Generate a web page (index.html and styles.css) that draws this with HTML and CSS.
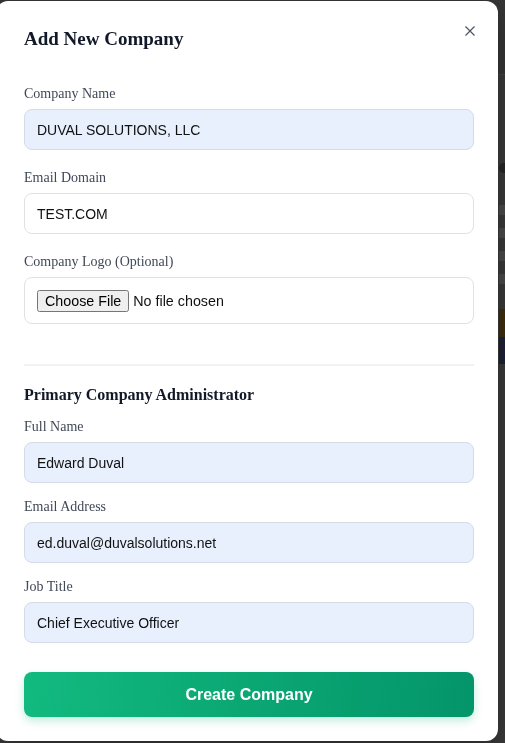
FILE: index.html
```html
<!DOCTYPE html>
<html lang="en">
<head>
<meta charset="utf-8">
<title>Add New Company</title>
<link rel="stylesheet" href="styles.css">
</head>
<body>
<div class="page">
  <div class="page-top"></div>
  <div class="page-body">
    <div class="page-icon"></div>
    <div class="page-mark"></div>
    <div class="page-mark"></div>
    <div class="page-mark"></div>
    <div class="page-mark"></div>
    <div class="page-amber"></div>
    <div class="page-navy"></div>
  </div>
</div>

<div class="modal">
  <div class="modal-header">
    <h2 class="modal-title">Add New Company</h2>
    <button class="close-btn" aria-label="Close">
      <svg width="10" height="10" viewBox="0 0 10 10"><path d="M0.5 0.5 L9.5 9.5 M9.5 0.5 L0.5 9.5" stroke="#4b5563" stroke-width="1.2" fill="none"/></svg>
    </button>
  </div>

  <form class="form">
    <div class="group">
      <label class="label">Company Name</label>
      <input class="input filled" type="text" value="DUVAL SOLUTIONS, LLC">
    </div>
    <div class="group">
      <label class="label">Email Domain</label>
      <input class="input plain" type="text" value="TEST.COM">
    </div>
    <div class="group">
      <label class="label">Company Logo (Optional)</label>
      <div class="file-box"><input class="file" type="file"></div>
    </div>

    <hr class="divider">

    <h3 class="section-title">Primary Company Administrator</h3>
    <div class="group tight">
      <label class="label">Full Name</label>
      <input class="input filled" type="text" value="Edward Duval">
    </div>
    <div class="group tight">
      <label class="label">Email Address</label>
      <input class="input filled" type="text" value="ed.duval@duvalsolutions.net">
    </div>
    <div class="group tight">
      <label class="label">Job Title</label>
      <input class="input filled" type="text" value="Chief Executive Officer">
    </div>

    <button type="button" class="submit">Create Company</button>
  </form>
</div>
</body>
</html>
```

FILE: styles.css
```css
html, body {
  margin: 0;
  padding: 0;
  height: 100%;
}
body {
  background: #3a3a3a;
  font-family: "Liberation Serif", serif;
  overflow: hidden;
}
.page {
  display: flex;
  flex-direction: column;
  height: 100%;
}
.page-top {
  height: 74px;
  background: #363636;
  border-bottom: 1px solid #444;
}
.page-body {
  padding: 88px 0 0 499px;
  display: flex;
  flex-direction: column;
}
.page-icon {
  width: 10px;
  height: 10px;
  border-radius: 50%;
  background: #262626;
  margin-bottom: 32px;
}
.page-mark {
  width: 6px;
  height: 10px;
  background: #4a4a4a;
  margin-bottom: 13px;
}
.page-amber {
  margin-top: 12px;
  height: 28px;
  background: #3d2e0e;
}
.page-navy {
  height: 27px;
  background: #1f2236;
}

.modal {
  position: fixed;
  left: -4px;
  top: 1px;
  width: 502px;
  height: 740px;
  box-sizing: border-box;
  background: #ffffff;
  border-radius: 12px;
  padding: 24px 24px 24px 28px;
  box-shadow: 0 10px 30px rgba(0,0,0,0.3);
}
.modal-header {
  display: flex;
  justify-content: space-between;
  align-items: flex-start;
  margin-bottom: 31px;
}
.modal-title {
  margin: 0;
  font-family: "Liberation Serif", serif;
  font-size: 19px;
  line-height: 28px;
  font-weight: 700;
  color: #111827;
}
.close-btn {
  border: 0;
  background: none;
  padding: 0;
  margin: 1px -1px 0 0;
  width: 10px;
  height: 10px;
  display: flex;
  cursor: pointer;
}
.form {
  display: flex;
  flex-direction: column;
}
.group {
  display: flex;
  flex-direction: column;
  margin-bottom: 18px;
}
.group.tight {
  margin-bottom: 14px;
}
.label {
  font-family: "Liberation Serif", serif;
  font-size: 14px;
  line-height: 20px;
  color: #404856;
  margin-bottom: 5px;
}
.input {
  box-sizing: border-box;
  height: 41px;
  width: 100%;
  border-radius: 8px;
  padding: 0 12px;
  font-family: "Liberation Sans", Arial, sans-serif;
  font-size: 14px;
  color: #111;
  outline: none;
}
.input.filled {
  background: #e8f0fe;
  border: 1px solid #d5dbe5;
}
.input.plain {
  background: #fff;
  border: 1px solid #dfe1e5;
}
.file-box {
  box-sizing: border-box;
  height: 47px;
  border: 1px solid #dfe1e5;
  border-radius: 8px;
  padding: 0 12px;
  display: flex;
  align-items: center;
}
.file {
  font-family: "Liberation Sans", Arial, sans-serif;
  font-size: 14.3px;
  color: #111;
}
.divider {
  border: 0;
  border-top: 2px solid #f1f2f4;
  margin: 22px 0 17px;
}
.section-title {
  margin: 0 0 10px;
  font-family: "Liberation Serif", serif;
  font-size: 16px;
  line-height: 24px;
  font-weight: 700;
  color: #111827;
}
.submit {
  margin-top: 15px;
  height: 45px;
  border: 0;
  border-radius: 8px;
  background: linear-gradient(100deg, #12ba80 0%, #0aa572 55%, #04956a 100%);
  color: #fff;
  font-family: "Liberation Sans", Arial, sans-serif;
  font-size: 16px;
  font-weight: 700;
  box-shadow: 0 4px 8px rgba(16,185,129,0.25);
  cursor: pointer;
}
```
